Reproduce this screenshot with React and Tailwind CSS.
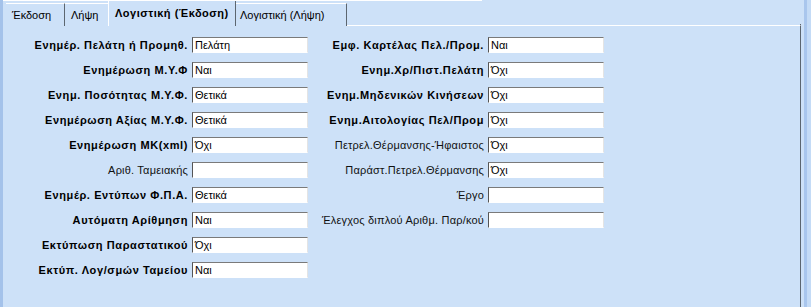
import React from "react";

const left = [
  ["Ενημέρ. Πελάτη ή Προμηθ.", "Πελάτη", true],
  ["Ενημέρωση Μ.Υ.Φ", "Ναι", true],
  ["Ενημ. Ποσότητας Μ.Υ.Φ.", "Θετικά", true],
  ["Ενημέρωση Αξίας Μ.Υ.Φ.", "Θετικά", true],
  ["Ενημέρωση ΜΚ(xml)", "Όχι", true],
  ["Αριθ. Ταμειακής", "", false],
  ["Ενημέρ. Εντύπων Φ.Π.Α.", "Θετικά", true],
  ["Αυτόματη Αρίθμηση", "Ναι", true],
  ["Εκτύπωση Παραστατικού", "Όχι", true],
  ["Εκτύπ. Λογ/σμών Ταμείου", "Ναι", true],
];

const right = [
  ["Εμφ. Καρτέλας Πελ./Προμ.", "Ναι", true],
  ["Ενημ.Χρ/Πιστ.Πελάτη", "Όχι", true],
  ["Ενημ.Μηδενικών Κινήσεων", "Όχι", true],
  ["Ενημ.Αιτολογίας Πελ/Προμ", "Όχι", true],
  ["Πετρελ.Θέρμανσης-Ήφαιστος", "Όχι", false],
  ["Παράστ.Πετρελ.Θέρμανσης", "Όχι", false],
  ["Έργο", "", false],
  ["Έλεγχος διπλού Αριθμ. Παρ/κού", "", false],
];

function Field({ label, value, bold, labelW }) {
  return (
    <div className="flex h-[16px] items-center">
      <div
        className={`${labelW} text-right whitespace-nowrap ${
          bold ? "font-bold tracking-[0.6px] text-black" : "tracking-[0.2px] text-[#111]"
        }`}
      >
        {label}
      </div>
      <div className="ml-[4px] flex h-[16px] w-[116px] items-center border border-t-[#7a7a7a] border-l-[#555] border-r-[#e4e4e4] border-b-white bg-white pl-[2px] text-black">
        {value}
      </div>
    </div>
  );
}

export default function App() {
  return (
    <div
      className="flex h-[307px] w-[811px] overflow-hidden bg-[#cde1f8] text-[11px] leading-none"
      style={{ fontFamily: '"Liberation Sans", Arial, sans-serif' }}
    >
      <div className="w-[3px] shrink-0 bg-[#a4c2ea]" />
      <div className="flex min-w-0 flex-1 flex-col">
        <div className="h-px">
          <div className="h-px w-[479px] bg-white" />
        </div>
        <div className="flex h-[25px] items-end">
          <div className="w-[3px] shrink-0" />
          <div className="flex h-[23px] w-[59px] items-center border-t border-r border-t-white border-r-[#5c6670] pl-[6px] text-black">
            Έκδοση
          </div>
          <div className="flex h-[23px] w-[43px] items-center border-t border-t-white pl-[6px] text-black">
            Λήψη
          </div>
          <div className="flex h-[25px] w-[128px] items-center border-l border-r border-l-white border-r-[#5c6670] pl-[6px] font-bold tracking-[0.5px] text-black">
            Λογιστική (Έκδοση)
          </div>
          <div className="flex h-[23px] w-[111px] items-center border-t border-r border-t-white border-r-[#5c6670] pl-[4px] text-black">
            Λογιστική (Λήψη)
          </div>
          <div className="h-[2px] flex-1 self-end border-b border-r border-b-white border-r-[#5c6670]" />
        </div>
        <div className="flex flex-1 border-r border-r-[#5c6670] pt-[11px]">
          <div className="flex flex-col gap-[9px] pl-[5px]">
            {left.map(([l, v, b]) => (
              <Field key={l} label={l} value={v} bold={b} labelW="w-[180px]" />
            ))}
          </div>
          <div className="flex flex-col gap-[9px]">
            {right.map(([l, v, b]) => (
              <Field key={l} label={l} value={v} bold={b} labelW="w-[176px]" />
            ))}
          </div>
        </div>
      </div>
      <div className="w-[3px] shrink-0 bg-[#cde1f8]" />
      <div className="w-[3px] shrink-0 bg-[#a9c6ed]" />
      <div className="w-[4px] shrink-0 bg-[#c4dbf6]" />
    </div>
  );
}
